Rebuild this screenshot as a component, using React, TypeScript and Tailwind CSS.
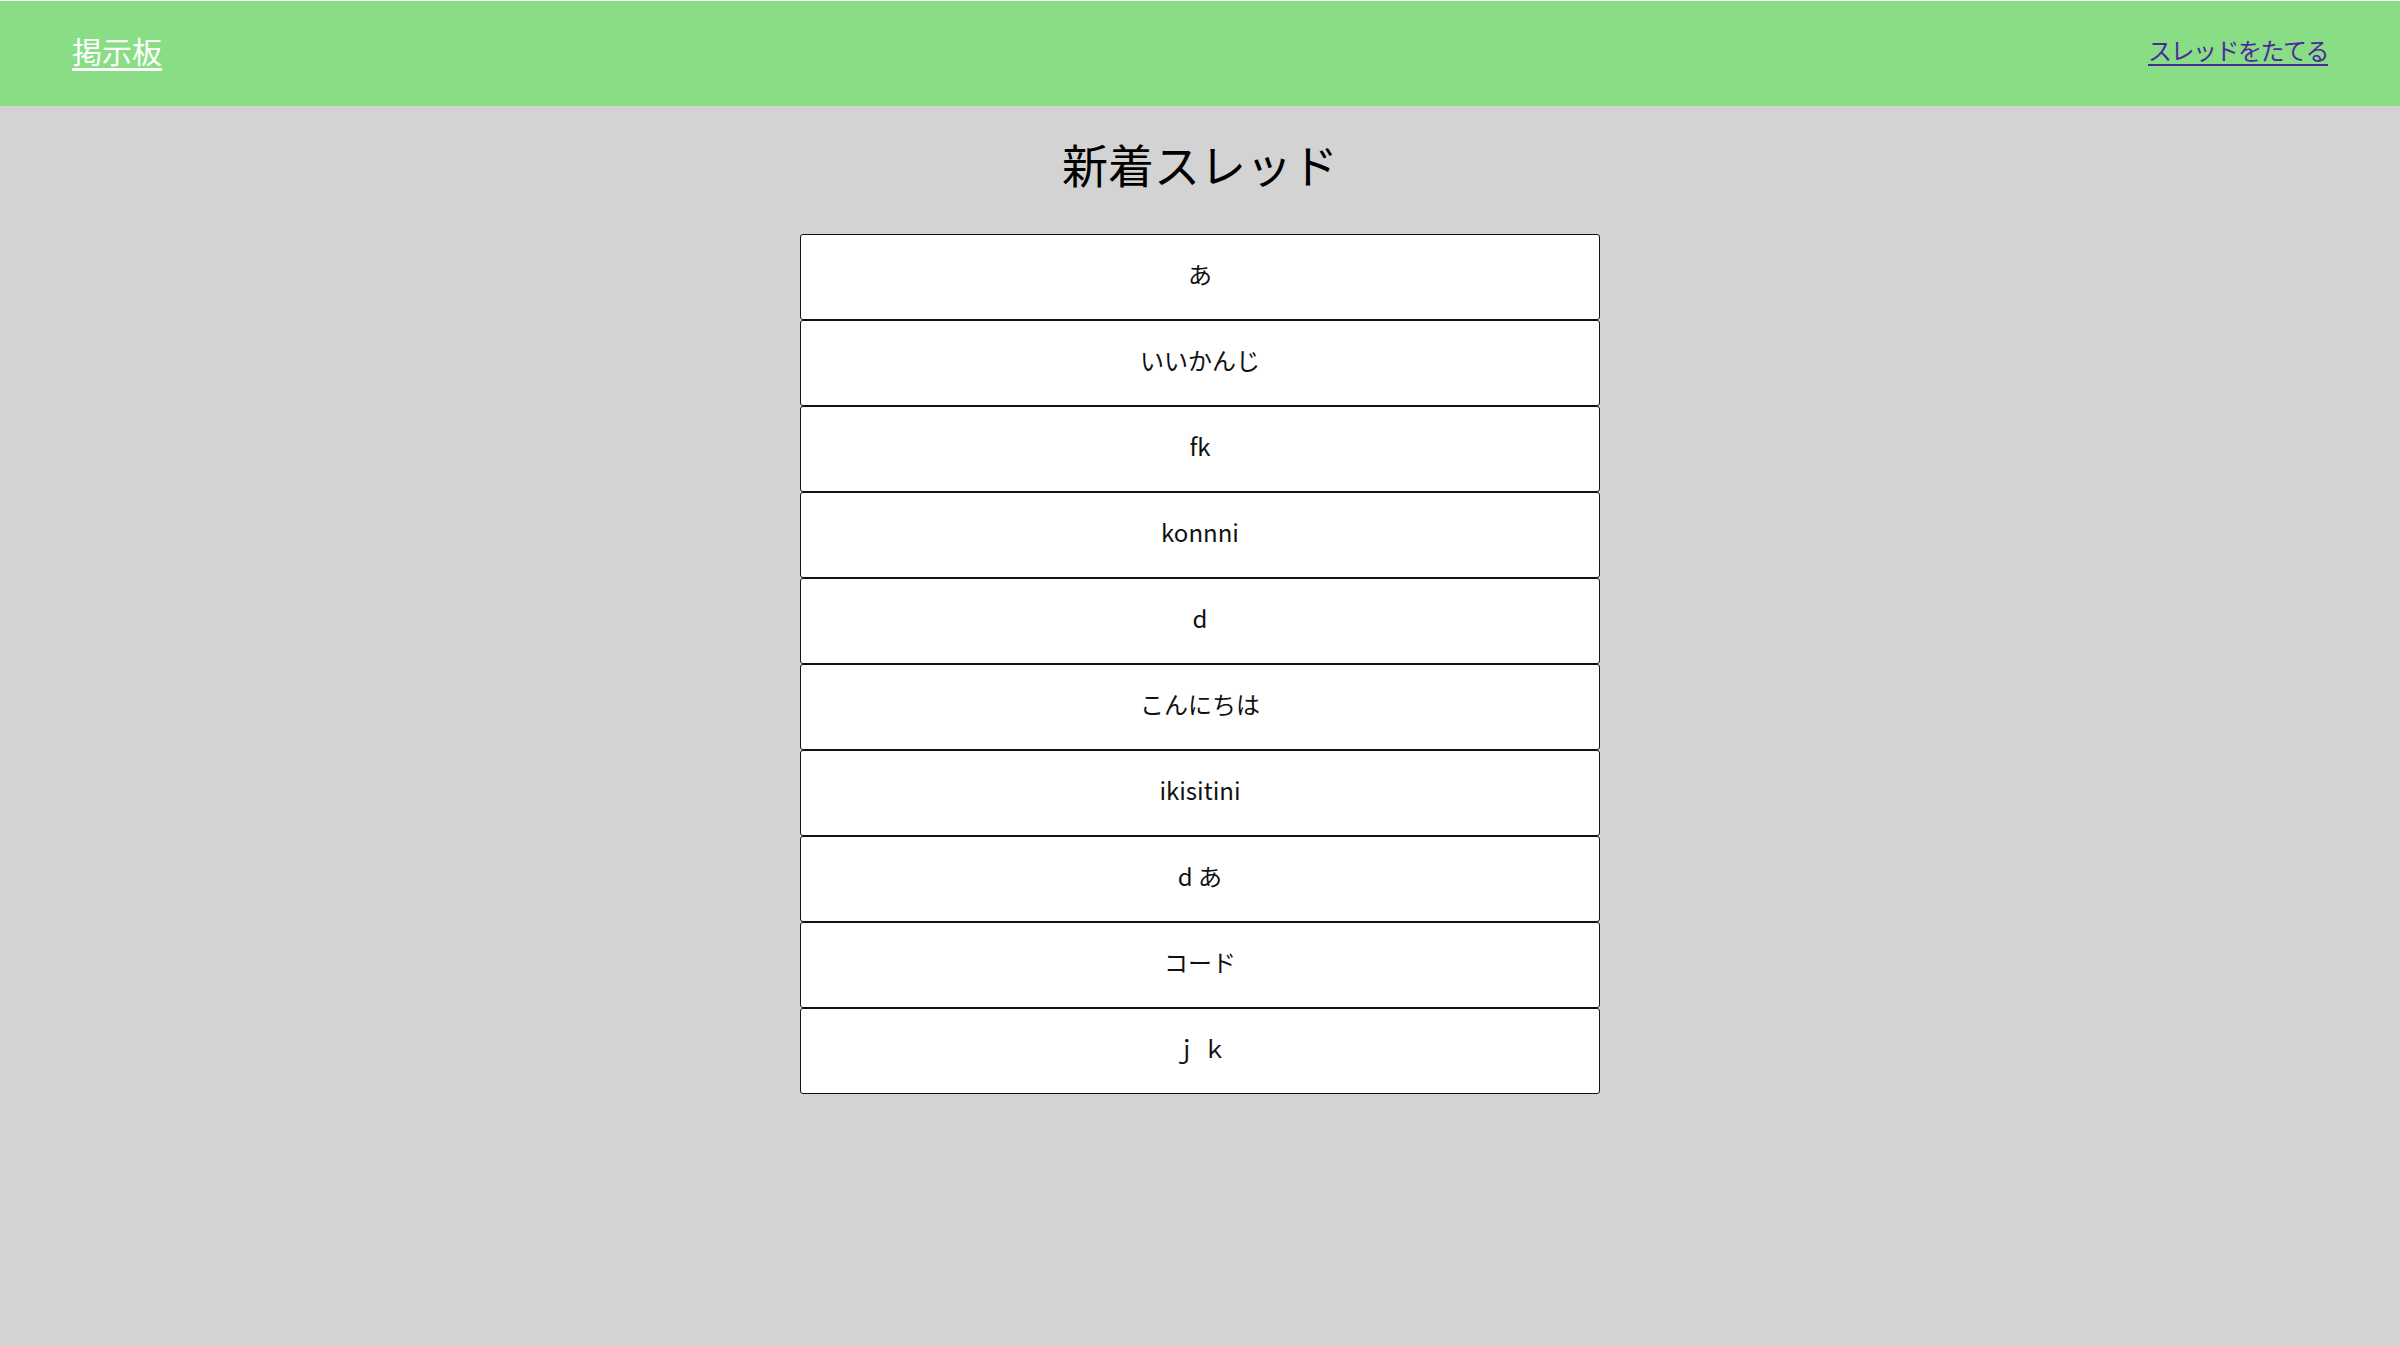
import React from "react";

const threads = [
  "あ",
  "いいかんじ",
  "fk",
  "konnni",
  "d",
  "こんにちは",
  "ikisitini",
  "d あ",
  "コード",
  "ｊ ｋ",
];

function Header() {
  return (
    <header className="mt-px flex h-[105px] items-center justify-between bg-[#89de85] px-[72px] pb-[8px]">
      <a href="#" className="text-[30px] leading-none text-white underline underline-offset-[5px]">
        掲示板
      </a>
      <a
        href="#"
        className="text-[24px] leading-none tracking-[-1.5px] text-[#4b2b9c] underline underline-offset-[4px]"
      >
        スレッドをたてる
      </a>
    </header>
  );
}

export default function App() {
  return (
    <div
      className="min-h-[1346px] bg-[#d3d3d3] text-[#111]"
      style={{ fontFamily: '"Noto Sans CJK JP", "Noto Sans", sans-serif' }}
    >
      <Header />
      <main className="flex flex-col items-center">
        {/* page title */}
        <div className="flex h-[128px] items-center justify-center pb-[14px]">
          <h1 className="text-[46px] font-normal leading-none text-black">新着スレッド</h1>
        </div>

        <ul className="flex w-[800px] flex-col">
          {threads.map((title, i) => (
            <li key={i}>
              <a
                href="#"
                className="flex h-[86px] items-center justify-center rounded-[3px] border border-[#111] bg-white pb-[6px] text-[24px] text-[#111]"
              >
                {title}
              </a>
            </li>
          ))}
        </ul>
      </main>
    </div>
  );
}
